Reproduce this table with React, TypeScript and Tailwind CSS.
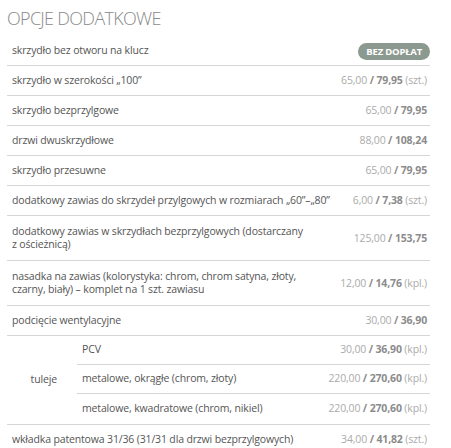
const rows: { label: string[]; net: string; gross: string; unit?: string }[] = [
  { label: ["skrzydło w szerokości „100”"], net: "65,00", gross: "79,95", unit: "(szt.)" },
  { label: ["skrzydło bezprzylgowe"], net: "65,00", gross: "79,95" },
  { label: ["drzwi dwuskrzydłowe"], net: "88,00", gross: "108,24" },
  { label: ["skrzydło przesuwne"], net: "65,00", gross: "79,95" },
  {
    label: ["dodatkowy zawias do skrzydeł przylgowych w rozmiarach „60”–„80”"],
    net: "6,00",
    gross: "7,38",
    unit: "(szt.)",
  },
  {
    label: [
      "dodatkowy zawias w skrzydłach bezprzylgowych (dostarczany",
      "z ościeżnicą)",
    ],
    net: "125,00",
    gross: "153,75",
  },
  {
    label: [
      "nasadka na zawias (kolorystyka: chrom, chrom satyna, złoty,",
      "czarny, biały) – komplet na 1 szt. zawiasu",
    ],
    net: "12,00",
    gross: "14,76",
    unit: "(kpl.)",
  },
  { label: ["podcięcie wentylacyjne"], net: "30,00", gross: "36,90" },
];

const tuleje = [
  { label: "PCV", net: "30,00", gross: "36,90", unit: "(kpl.)" },
  { label: "metalowe, okrągłe (chrom, złoty)", net: "220,00", gross: "270,60", unit: "(kpl.)" },
  { label: "metalowe, kwadratowe (chrom, nikiel)", net: "220,00", gross: "270,60", unit: "(kpl.)" },
];

function Price({ net, gross, unit }: { net: string; gross: string; unit?: string }) {
  return (
    <span className="whitespace-nowrap text-[#ababab]">
      {net}
      <span className="font-bold text-[#8c8c8c]"> / {gross}</span>
      {unit && <span> {unit}</span>}
    </span>
  );
}

export default function App() {
  return (
    <main className="min-h-[448px] bg-white pl-[7px] pt-[5px] font-['Open_Sans',sans-serif] text-[10.5px] tracking-[-0.15px] text-[#555]">
      <h1 className="text-[18px] font-light leading-[26px] tracking-[-0.7px] text-[#8a8a8a]">
        OPCJE DODATKOWE
      </h1>

      <div className="mt-[6px] w-[423px]">
        {/* pierwszy wiersz z plakietką */}
        <div className="flex min-h-[29px] items-center justify-between border-b border-[#d6d6d6] pl-[5px]">
          <span className="whitespace-nowrap">skrzydło bez otworu na klucz</span>
          <span className="rounded-full bg-[#8b9990] px-[8px] text-[9.5px] font-bold leading-[17px] tracking-[-0.2px] text-white">
            BEZ DOPŁAT
          </span>
        </div>

        {rows.map((r) => (
          <div
            key={r.label[0]}
            className={
              "flex min-h-[30px] items-center justify-between gap-4 border-b border-[#d6d6d6] pl-[5px] pr-[3px] leading-[13px] " +
              (r.label.length > 1 ? "py-[9px]" : "py-[8px]")
            }
          >
            <span>
              {r.label.map((l, i) => (
                <span key={i} className="block whitespace-nowrap">
                  {l}
                </span>
              ))}
            </span>
            <Price net={r.net} gross={r.gross} unit={r.unit} />
          </div>
        ))}

        {/* tuleje */}
        <div className="flex border-b border-[#d6d6d6]">
          <div className="flex w-[70px] items-center justify-end pr-[20px]">tuleje</div>
          <div className="flex-1">
            {tuleje.map((t, i) => (
              <div
                key={t.label}
                className={
                  "flex items-center justify-between pl-[5px] pr-[3px] " +
                  (i < tuleje.length - 1 ? "min-h-[29px] border-b border-[#d6d6d6]" : "min-h-[30px]")
                }
              >
                <span className="whitespace-nowrap">{t.label}</span>
                <Price net={t.net} gross={t.gross} unit={t.unit} />
              </div>
            ))}
          </div>
        </div>

        <div className="flex min-h-[30px] items-center justify-between pl-[5px] pr-[3px]">
          <span className="whitespace-nowrap">wkładka patentowa 31/36 (31/31 dla drzwi bezprzylgowych)</span>
          <Price net="34,00" gross="41,82" unit="(szt.)" />
        </div>
      </div>
    </main>
  );
}
